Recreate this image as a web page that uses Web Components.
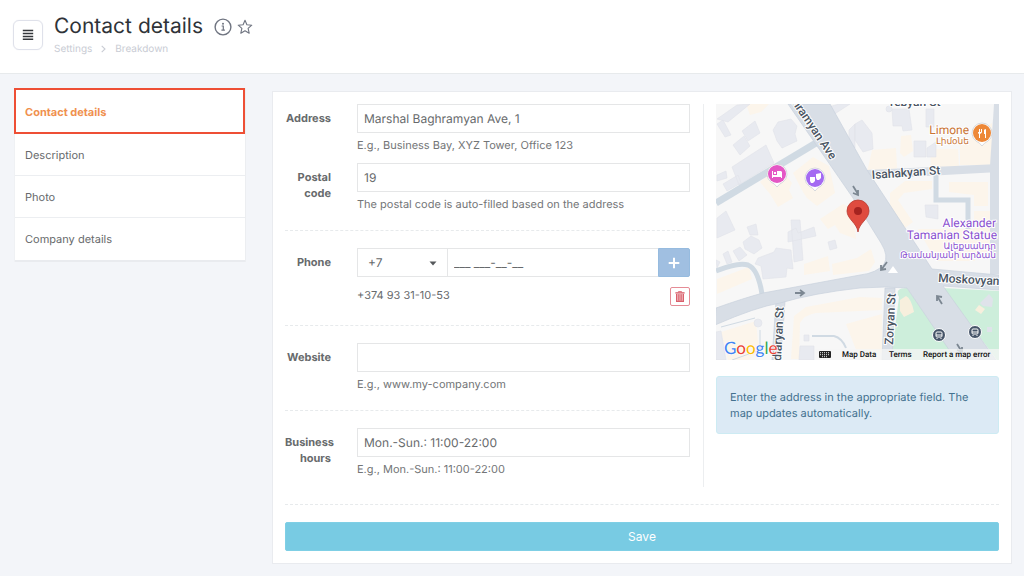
<!DOCTYPE html>
<html lang="en">
<head>
<meta charset="utf-8">
<meta name="viewport" content="width=device-width, initial-scale=1">
<title>Contact details</title>
<style>
  html { background: #f3f5f9; }
  body { margin: 0; font: 11px/16px Inter, "Liberation Sans", sans-serif; color: #676a6c; text-rendering: geometricPrecision; }
</style>
</head>
<body>
<settings-page></settings-page>

<script>
const define = (name, html, setup) => {
  const template = document.createElement('template');
  template.innerHTML = html;
  customElements.define(name, class extends HTMLElement {
    connectedCallback() {
      if (this.shadowRoot) return;
      const root = this.attachShadow({ mode: 'open' });
      root.append(template.content.cloneNode(true));
      if (setup) setup(this, root);
    }
  });
};

const fieldStyles = `
  :host { display: grid; grid-template-columns: 46px minmax(0, 1fr); column-gap: 26px; }
  * { box-sizing: border-box; }
  label { font-weight: 700; text-align: right; padding-top: 6px; }
  input, select { display: block; width: 100%; height: 29px; margin: 0; padding: 0 6px;
    border: 1px solid #e5e6e7; border-radius: 0; background: #fff; color: #676a6c;
    font: 12px/16px Inter, "Liberation Sans", sans-serif; text-rendering: inherit; outline: 0; }
  input:focus, select:focus { border-color: #78cbe3; }
`;

define('page-header', `
<style>
  :host { display: flex; gap: 11px; box-sizing: border-box; height: 74px; padding: 20px 13px 0;
    background: #fff; border-bottom: 1px solid #e7eaec; }
  button { padding: 0; border: 0; background: none; display: block; cursor: pointer; }
  .menu { box-sizing: border-box; width: 30px; height: 30px; border: 1px solid #dfe1ea; border-radius: 6px;
    display: grid; place-items: center; box-shadow: 0 0 1px #dfe1ea; flex: none; }
  .text { margin-top: -7px; }
  .title { display: flex; align-items: center; }
  h1 { margin: 0 11px 0 0; font-size: 21px; line-height: 28px; font-weight: 400; color: #2f3338; }
  .info { margin-right: 5px; }
  nav { display: flex; align-items: center; gap: 9px; color: #c9ccd4; font-size: 10px; }
  a { color: inherit; text-decoration: none; }
  svg { display: block; }
</style>
<button class="menu" aria-label="Menu"><svg width="12" height="12" viewBox="0 0 12 12"><path d="M.8 1.6h10.4M.8 4.5h10.4M.8 7.4h10.4M.8 10.3h10.4" stroke="#34373b" stroke-width="1.5"/></svg></button>
<div class="text">
  <div class="title">
    <h1>Contact details</h1>
    <button class="info" aria-label="Information"><svg width="18" height="18" viewBox="0 0 18 18" fill="none"><circle cx="9" cy="9" r="7.9" stroke="#6f7480" stroke-width="1.4"/><path d="M7.6 8h1.7v4M7.4 12.2h3.5" stroke="#6f7480" stroke-width="1.2"/><circle cx="9" cy="5.7" r="1" fill="#6f7480"/></svg></button>
    <button aria-label="Add to favourites"><svg width="16" height="16" viewBox="0 0 16 16"><path d="M8 1.3 9.9 5.8l4.9.4-3.7 3.2 1.1 4.8L8 11.7l-4.2 2.5 1.1-4.8L1.2 6.2l4.9-.4Z" fill="none" stroke="#6f7480" stroke-width="1.1" stroke-linejoin="round"/></svg></button>
  </div>
  <nav aria-label="Breadcrumb">
    <a href="#settings">Settings</a>
    <svg width="5" height="8" viewBox="0 0 5 8"><path d="m.7.8 3.3 3.2L.7 7.2" fill="none" stroke="#c9ccd4" stroke-width="1.1"/></svg>
    <a href="#breakdown">Breakdown</a>
  </nav>
</div>`);

define('side-nav', `
<style>
  :host { display: block; }
  nav { background: #fff; border-bottom: 2px solid #e9ebef; box-shadow: 1px 0 #eceef1, -1px 0 #eff1f4; }
</style>
<nav aria-label="Sections"><slot></slot></nav>`);

define('side-link', `
<style>
  :host { display: block; }
  a { display: flex; align-items: center; box-sizing: border-box; height: 42px; padding: 0 10px;
    color: #676a6c; text-decoration: none; border-bottom: 1px solid #eceef1; }
  :host(:last-child) a { border-bottom: 0; }
  :host([current]) { margin-left: -1px; }
  :host([current]) a { height: 46px; padding: 2px 9px 0; border: 2px solid #ee4f35; color: #f0914f; font-weight: 700; }
</style>
<a href="#section"><slot></slot></a>`, (host, root) => {
  if (host.hasAttribute('current')) root.querySelector('a').setAttribute('aria-current', 'page');
});

define('form-section', `
<style>
  :host { display: grid; gap: 10px; padding-bottom: 18px; margin-bottom: 17px; border-bottom: 1px dashed #e7eaec; }
  :host(:last-child) { padding-bottom: 10px; margin-bottom: 0; border-bottom: 0; }
</style>
<slot></slot>`);

define('text-field', `
<style>${fieldStyles}
  p { margin: 4px 0 0; color: #737577; }
</style>
<label for="control"></label>
<div><input id="control" type="text" aria-describedby="hint"><p id="hint"><slot></slot></p></div>`, (host, root) => {
  root.querySelector('label').textContent = host.getAttribute('label');
  root.querySelector('input').value = host.getAttribute('value') || '';
});

define('phone-field', `
<style>${fieldStyles}
  .group { display: grid; grid-template-columns: 91px minmax(0, 1fr) 32px; }
  .code { position: relative; }
  select { appearance: none; padding: 0 10px; }
  .code svg { position: absolute; right: 11px; top: 13px; pointer-events: none; }
  .group input { border-left: 0; border-right: 0; }
  button { display: grid; place-items: center; padding: 0; cursor: pointer; }
  .add { border: 1px solid #96bbdf; border-radius: 0 2px 2px 0; background: #a0bfe1; }
  .number { display: flex; justify-content: space-between; align-items: flex-start; min-height: 20px; margin-top: 10px; }
  .remove { width: 20px; height: 19px; border: 1px solid #e58c96; border-radius: 2px; background: #fff; }
</style>
<label for="control">Phone</label>
<div>
  <div class="group">
    <div class="code">
      <select aria-label="Country code"><option>+7</option><option>+374</option></select>
      <svg width="8" height="5" viewBox="0 0 8 5"><path d="M.5.5h7L4 4.5Z" fill="#55585b"/></svg>
    </div>
    <input id="control" type="tel" value="___ ___-__-__">
    <button class="add" aria-label="Add phone"><svg width="12" height="12" viewBox="0 0 12 12"><path d="M6 .7v10.6M.7 6h10.6" stroke="#fff" stroke-width="2"/></svg></button>
  </div>
  <div class="number">
    <span>+374 93 31-10-53</span>
    <button class="remove" aria-label="Remove phone"><svg width="10" height="11" viewBox="0 0 10 11" fill="none" stroke="#d9606c"><path d="M3.4 1.4V.6h3.2v.8" stroke-width=".9"/><path d="M.4 1.9h9.2" stroke-width="1.4"/><path d="M1.6 3v7.3h6.8V3" stroke-width="1.2" fill="#f0bcc1"/><path d="M3.6 3.2v6.6M5 3.2v6.6M6.4 3.2v6.6" stroke-width=".8"/></svg></button>
  </div>
</div>`);

define('location-map', `
<style>
  :host { display: block; }
  svg { display: block; width: 100%; height: auto; }
  text { font-family: Roboto, "DejaVu Sans", sans-serif; }
  .street { font-size: 12px; font-weight: 500; fill: #4a5563; stroke: #fff; stroke-width: 2px; paint-order: stroke; stroke-linejoin: round; }
  .place { font-size: 12px; text-anchor: end; stroke: #fff; stroke-width: 2px; paint-order: stroke; stroke-linejoin: round; }
  .local { font-size: 9px; }
  .google { font: 400 17px Lato, sans-serif; stroke: #fff; stroke-width: 1px; paint-order: stroke; }
  .legal { font-size: 8px; font-weight: 500; fill: #111; }
</style>
<svg viewBox="0 0 283 256" role="img" aria-label="Map">
  <rect width="283" height="256" fill="#f7f7f7"/>
  <g fill="#fcf5eb">
    <path d="M30 0h23l-8 8-11 3ZM44 78l18-16 14 17-3 7 4 8-15 9-8-13ZM77 69l20-16 16 9 6 27-18 13-10-8-4-6ZM104 115l23-15 10 5 3 30-16-6-5-8-7 4ZM88 160l24-8 2 15-26 4ZM116 160l25-6 14-9 4 13-6 9-36 4ZM1 175l32-12 3 12-35 15ZM90 203l54-10 22 1v12l-66 3q-12 2-16 10l-1 36H75l3-43ZM130 220l36-10v38l-10 8h-12ZM151 68l5-22 24-2 1 20-23 8ZM185 32l10-1 2 16-9 6-4-4ZM214 45h28l1 18h-28ZM244 41l32-22V61h-32ZM174 89l15-12h27v8l-28 4-6 7 15 22-8 6-15-18ZM233 78h39v24h-14V91l-25-3ZM202 125h57v32h-39ZM258 107h18v46h-18Z"/>
    <path d="m5 228 35-11 3 31-11 8H12Z"/>
  </g>
  <g fill="#e8eaf0" stroke="#e0e3ea" stroke-width=".6">
    <path d="M1 15 21 1 34 0 12 18ZM1 20l6-4 8 15-6 2ZM26 27l13-10 5 12-12 8ZM17 41l11-9 6 10-10 9ZM16 63l34-22 8 18-35 22ZM7 80l15-9 3 8-14 8ZM1 71l9-4 1 7-10 3ZM57 26l5-8 13-3 6 7-2 8 2 7-15 7-5-7ZM1 114l9-7 9 19-18 8ZM31 123l9-3 2 11h-8ZM72 128l8-4 2 5 16-6 2 9-28 6ZM109 4l14-4h11l-20 13ZM139 20l7-4 10 13 1 16-10 3-8-12ZM133 26l6-6v24l-6-6ZM176 5h17l3 21-9 1-1-5h-9ZM210 5h8v18h-8ZM198 37h12v16h-12ZM211 44l9-6v15h-9ZM209 101h13v14l-12-2ZM27 138l8-6 8 4 3 8-8 6-9-5ZM17 147l7-4 7 8-8 6ZM7 150l5-3 4 11-5 2ZM42 154l16-6 2-4 15 2 2 19-6-1-1 9-23 2-2-13-6-2ZM75 116h9l3 40-9 2ZM0 156l4 2-3 6ZM112 138l7-2 2 8-7 2ZM0 228l5-1 5 29H0ZM84 242h14v14H83ZM88 231h5v6h-5Z"/>
    <circle cx="42" cy="219" r="4"/><circle cx="173" cy="5" r="3"/>
  </g>
  <path d="M183 193q-5-9 8-9l50 72h-66Z M227 184l56 3v69h-2Z" fill="#cdeedb"/>
  <path d="m184 196 6-4q5 2 8 16l-10 5-4-6Z" fill="#f7efdd"/>
  <path d="m267 196 6-6 4 5-1 8-9-1-3-3ZM271 223h5v5h-5Z" fill="#dfe3ea"/><path d="m259 206 4-5 6 4-4 5Z" fill="#f7efdd"/>
  <g fill="none" stroke="#d0dae3">
    <path d="M0 99 100 39" stroke-width="7"/>
    <path d="M0 167Q22 158 32 161q10 4 14 29" stroke-width="5"/>
    <path d="M220 69v27h32v29" stroke-width="5"/>
    <path d="M96 232h22q8 2 12 12" stroke-width="2"/>
    <path d="m5 223 34-9M16 256l28-10v-20" stroke-width="1"/>
  </g>
  <g fill="#d8dee6" stroke="#c9d1dc" stroke-width=".7">
    <path d="M60 197h9l-4 59h-9ZM169 184h10l-3 72h-10Z"/>
    <path d="M278 0h6v170h-10V62Z" stroke="none"/>
    <path d="m150 66 133-6v8l-127 7Z" stroke="none"/>
    <path d="M0 204q28-10 47-15l97-18q17-2 24-11 5-8-3-21L137 94 72 0h42l37 66 65 99 67 6v15l-56-4 53 74h-40l-49-72-22-1-25 1q-46 5-80 15-24 4-65 22Z"/>
  </g>
  <path d="m177 162-5 7h10Z" fill="#fff"/>
  <g fill="none" stroke="#7c8792" stroke-width="1.8">
    <path d="M79 189h8m-3-3 4 3-4 3M137 82l5 8m-5-1 5 2v-5M171 158l-6 8m0-5v5l5-1M226 200l-5-8m0 5v-5l5 1M241 240l5 8m-5-2 5 2v-5"/>
  </g>
  <g class="street">
    <text transform="translate(72 -7) rotate(56)">ghramyan Ave</text>
    <text x="174" y="2">rebyan St</text>
    <text transform="translate(156 75) rotate(-4)">Isahakyan St</text>
    <text transform="translate(222 178) rotate(3)">Moskovyan</text>
    <text transform="translate(65 257) rotate(-87)">diaryan St</text>
    <text transform="translate(177 241) rotate(-87)">Zoryan St</text>
  </g>
  <g class="place" fill="#c97435"><text x="253" y="30">Limone</text><text class="local" x="253" y="40">Լիմօնե</text></g>
  <g class="place" fill="#8a50d0"><text x="280" y="123">Alexander</text><text x="281" y="135">Tamanian Statue</text><text class="local" x="280" y="145">Ալեքսանդր</text><text class="local" x="280" y="154">Թամանյանի արձան</text></g>
  <g stroke="#cdd1d6" stroke-width=".8" fill="#fff">
    <path d="M61 83q-2-3-6-5a10 10 0 1 1 12 0q-4 2-6 5Z"/><circle cx="61" cy="70" r="9" fill="#e457c5" stroke="none"/>
    <path d="M99 87q-2-3-6-5a10 10 0 1 1 12 0q-4 2-6 5Z"/><circle cx="99" cy="74" r="9" fill="#a46af2" stroke="none"/>
    <path d="M266 42q-2-3-6-5a10 10 0 1 1 12 0q-4 2-6 5Z"/><circle cx="266" cy="29" r="9" fill="#ed8838" stroke="none"/>
  </g>
  <path d="M56 67h1v4h8v2h-8v1h-1ZM58 68h2v2h-2ZM61 67h4l1 1v6h-1v-3h-4Z" fill="#fff"/>
  <path d="M94 73h5v4l-2 2h-2l-1-2ZM100 70l5-1v5l-2 2h-2l-1-2Z" fill="#fff"/>
  <path d="M262 25v3q0 2 1 2v4h1v-4q2-1 2-2v-3h-1v3h-1v-3h-1v3h-1v-3ZM268 26q2-2 2 0v8h-1v-4h-1Z" fill="#fff"/>
  <path d="M142 128c-1-9-11-13-11-21a11 11 0 0 1 22 0c0 8-10 12-11 21Z" fill="#df4b3f" stroke="#b83b31" stroke-width=".8"/><circle cx="142" cy="107" r="4" fill="#a52320"/>
  <g fill="#465469" stroke="#fff"><circle cx="223" cy="231" r="6.5"/><circle cx="259" cy="228" r="6.5"/></g>
  <g fill="none" stroke="#fff"><rect x="220" y="228" width="6" height="5" rx="1"/><path d="M220 231h6m-5 3v1m4-1v1"/><rect x="256" y="225" width="6" height="5" rx="1"/><path d="M256 228h6m-5 3v1m4-1v1"/></g>
  <path d="M99 245h184v11H99Z" fill="#f5f5f5" fill-opacity=".75"/>
  <text class="google" x="8" y="250"><tspan fill="#4285f4">G</tspan><tspan fill="#ea4335">o</tspan><tspan fill="#fbbc05">o</tspan><tspan fill="#4285f4">g</tspan><tspan fill="#34a853">l</tspan><tspan fill="#ea4335">e</tspan></text>
  <rect x="103" y="247" width="12" height="7" rx="1" fill="#222"/><path d="M104 248.7h10M104 250.7h10M106 252.7h6" stroke="#fff" stroke-width=".9" stroke-dasharray="1"/>
  <g class="legal"><text x="126" y="253">Map Data</text><text x="173" y="253">Terms</text><text x="207" y="253">Report a map error</text></g>
</svg>`);

define('info-note', `
<style>
  :host { display: block; padding: 12px 13px; border: 1px solid #cdebf3; border-radius: 3px; background: #dceaf5; color: #43718f; }
</style>
<slot></slot>`);

define('contact-form', `
<style>
  :host { display: block; padding: 12px; background: #fff; border: 1px solid #e9ebef; }
  .columns { display: grid; grid-template-columns: minmax(0, 419fr) minmax(0, 295fr); }
  .fields { padding-right: 13px; border-right: 1px solid #eceef0; }
  .place { display: grid; gap: 16px; align-content: start; padding-left: 12px; }
  .actions { margin-top: 17px; padding-top: 17px; border-top: 1px dashed #e7eaec; }
  button { display: block; width: 100%; height: 29px; padding: 0; border: 1px solid #7fcfe5; border-radius: 2px;
    background: #78cbe3; color: #fff; font: 12px/16px Inter, "Liberation Sans", sans-serif; cursor: pointer; }
</style>
<form>
  <div class="columns">
    <div class="fields">
      <form-section>
        <text-field label="Address" value="Marshal Baghramyan Ave, 1">E.g., Business Bay, XYZ Tower, Office 123</text-field>
        <text-field label="Postal code" value="19">The postal code is auto-filled based on the address</text-field>
      </form-section>
      <form-section><phone-field></phone-field></form-section>
      <form-section><text-field label="Website">E.g., www.my-company.com</text-field></form-section>
      <form-section><text-field label="Business hours" value="Mon.-Sun.: 11:00-22:00">E.g., Mon.-Sun.: 11:00-22:00</text-field></form-section>
    </div>
    <div class="place">
      <location-map></location-map>
      <info-note>Enter the address in the appropriate field. The map updates automatically.</info-note>
    </div>
  </div>
  <div class="actions"><button type="button">Save</button></div>
</form>`);

define('settings-page', `
<style>
  :host { display: block; }
  main { display: grid; grid-template-columns: 230px minmax(0, 1fr); gap: 27px; align-items: start; padding: 14px 12px 12px 15px; }
  contact-form { margin-top: 3px; }
</style>
<page-header></page-header>
<main>
  <side-nav>
    <side-link current>Contact details</side-link>
    <side-link>Description</side-link>
    <side-link>Photo</side-link>
    <side-link>Company details</side-link>
  </side-nav>
  <contact-form></contact-form>
</main>`);
</script>
</body>
</html>
